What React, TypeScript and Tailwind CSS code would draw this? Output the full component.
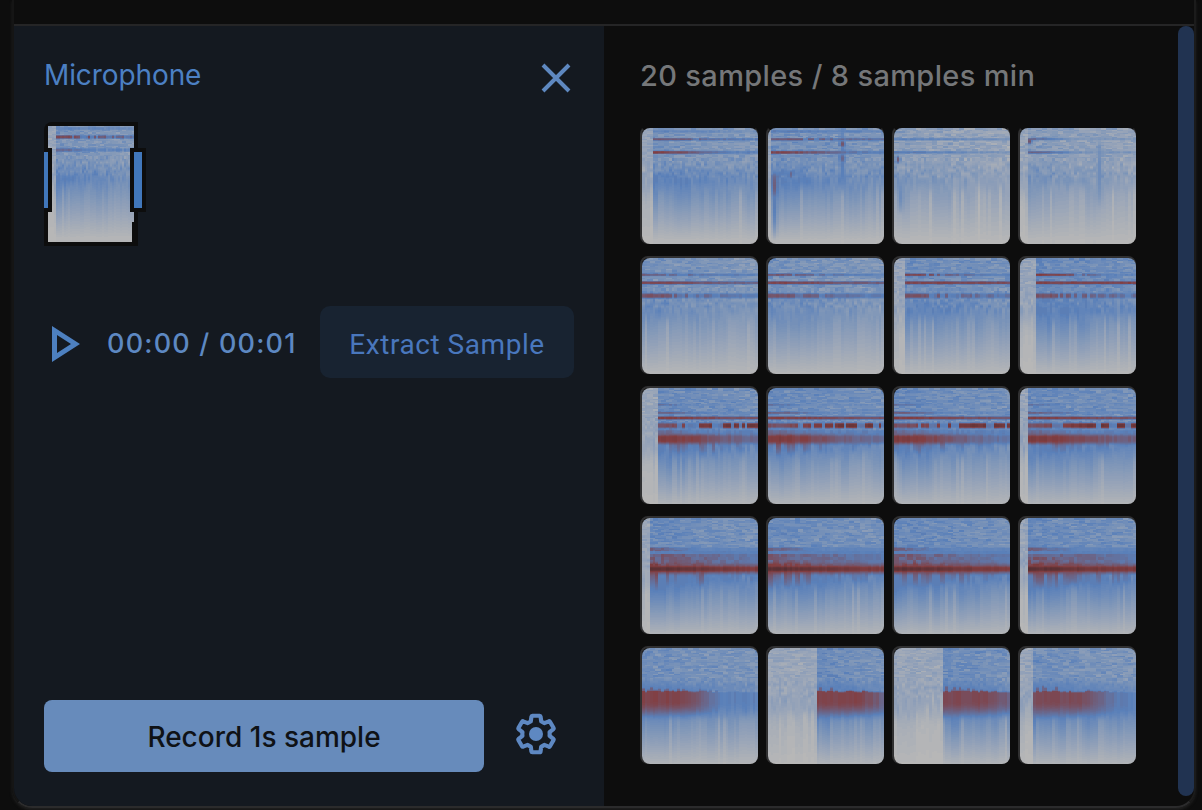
import React from "react";

type Band = { y: number; h: number; from: number; to: number; dash?: number; reach?: number };
type Spec = {
  seed: number;
  onset: number;
  top: number;
  low: number;
  peak: number;
  end: number;
  bands: Band[];
  fingers?: [number, number, number];
  haze?: [number, number, number];
  block?: [number, number];
  clicks?: [number, number, number, number][];
};

const COLS = 43;
const SIZE = 116;
const LEVELS = 84;

function hash(a: number, b: number, c: number) {
  let h = Math.imul(a + 11, 374761393) ^ Math.imul(b + 7, 668265263) ^ Math.imul(c + 3, 2147483647 - 1640531);
  h = Math.imul(h ^ (h >>> 13), 1274126177);
  h = Math.imul(h ^ (h >>> 15), 2246822519);
  return ((h ^ (h >>> 16)) >>> 0) / 4294967296;
}

const bell = (a: number, b: number, c: number) => (hash(a, b, c) + hash(a, b, c + 500)) / 2;
const clamp = (v: number, lo = 0, hi = 1) => Math.max(lo, Math.min(hi, v));
const smooth = (v: number) => {
  const t = clamp(v);
  return t * t * (3 - 2 * t);
};

const STOPS = [
  [183, 183, 183],
  [90, 128, 185],
  [130, 62, 65],
  [66, 40, 44],
];

function colour(v: number) {
  const t = clamp(v, 0, 2.999);
  const i = Math.floor(t);
  const f = t - i;
  const c = STOPS[i].map((s, k) => Math.round(s + (STOPS[i + 1][k] - s) * f));
  return `rgb(${c[0]},${c[1]},${c[2]})`;
}

function rowKey(y: number) {
  if (y < 30) return y / 1.5;
  if (y < 50) return 20 + (y - 30) / 3;
  return 26.67 + (y - 50) / 8;
}

function level(s: Spec, c: number, y: number) {
  const x = (c + 0.5) / COLS;
  const live = x >= s.onset;
  const age = live ? (x - s.onset) / (1 - s.onset) : 0;
  const k = rowKey(y);
  const r0 = Math.floor(k);
  const f = k - r0;
  const group = y < 30 ? Math.floor((c + hash(r0, 5, s.seed) * 3) / 2) : c;
  const a = bell(group, r0, s.seed);
  const b = bell(c, r0 + 1, s.seed);
  const n = (y < 34 ? a : a + (b - a) * f) - 0.5;
  const streak = hash(c, 991, s.seed);
  const drift = hash(Math.floor(c / 3), 417, s.seed) - 0.5;

  const upper = s.top - age * 0.14 + n * 0.55;
  const ramp = smooth((y - 30) / (s.peak - 30));
  const body = s.low - age * 0.28 + n * 0.5 * (1 - smooth((y - s.peak + 8) / 24));
  let v = upper + (body - upper) * ramp;
  const fall = clamp((y - s.peak) / (s.end - s.peak));
  const pale = (streak > 0.93 ? 0.3 : streak > 0.8 ? 0.12 : streak < 0.2 ? -0.06 : 0) + drift * 0.22;
  v -= pale * smooth((y - s.peak + 4) / 20);
  v *= 1 - Math.pow(fall, 0.95) * 0.97;
  if (!live) {
    v = (0.34 + n * 0.42) * (1 - smooth((y - 48) / 34) * 0.75) * (1 - fall);
    if (streak < 0.4) v += 0.14 * (1 - fall) * smooth((y - 45) / 20);
    return v;
  }
  v = Math.min(v, 1.04);

  if (s.haze) {
    const [y0, y1, amt] = s.haze;
    const inside = smooth((y - y0) / 2) * (1 - smooth((y - y1) / 3));
    const h = hash(Math.floor(c / 1.6), Math.floor(y / 3.5), s.seed + 9);
    const near = y < y0 + 5 ? 1 - smooth(age / 0.5) : y < y0 + 8 ? 0.15 : 1 - age * 0.75;
    v += (0.96 + amt * (0.4 + h * 0.6) * near - v) * inside * (y < y0 + 8 ? 0.85 : 1);
  }
  if (s.fingers) {
    const [y0, y1, amt] = s.fingers;
    const len = hash(Math.floor(c / 1.4), 77, s.seed);
    const reach = y0 + (y1 - y0) * (0.3 + len * 0.7) * (1 - age * 0.2);
    const t = (1 - smooth((y - y0) / Math.max(1, reach - y0))) * smooth((y - y0 + 9) / 6);
    if (y > y0 - 9 && y < reach) v += Math.max(0, len - 0.25) * amt * t * (1 - age * 0.75);
  }
  if (s.block) {
    const [hot, reach] = s.block;
    const jag = 43 - Math.pow(hash(c, 45, s.seed), 2) * 7 * (1 - age);
    if (y > 30) {
      const fade = 1 - smooth((age - reach * 0.45) / (reach * 0.65)) + (hash(c, 8, s.seed) - 0.5) * 0.18 * age;
      const inside = smooth((y - jag + 1) / 3) * (1 - smooth((y - 53) / 20));
      v += (1 + (hot - 0.12 * hash(c, 3, s.seed)) * fade * (y < 43 ? 0.5 : 1) - v) * inside;
      if (y < jag) v += (1 - v) * smooth((y - 28) / 13) * (1 - age * 0.75);
    }
  }
  for (const band of s.bands) {
    const d = Math.abs(y + 0.5 - band.y) / band.h;
    if (d > 2) continue;
    const t = smooth(age / (band.reach ?? 1));
    const jitter = hash(c, 31, s.seed + Math.round(band.y)) - 0.5;
    let peak = band.from + (band.to - band.from) * t + jitter * 0.2;
    if (band.dash && age > 0.2) {
      const h = hash(Math.floor(c / 1.3), 63, s.seed + Math.round(band.y));
      if (h < band.dash) peak = 0.95 + h * 0.6;
    }
    const w = d < 0.4 ? 1 : 1 - smooth((d - 0.4) / 1.6);
    v += (peak - v) * w;
  }
  for (const [cx, y0, y1, p] of s.clicks ?? []) {
    const dx = Math.abs(c - cx);
    if (dx <= 1 && y >= y0 && y <= y1) {
      const w = Math.sin(((y - y0) / (y1 - y0)) * Math.PI) * (dx ? 0.3 : 0.95);
      v += (Math.max(p, v) - v) * w;
    }
  }
  return v;
}

function Spectrogram({ spec, className }: { spec: Spec; className: string }) {
  const paths: string[] = Array(LEVELS + 1).fill("");
  for (let c = 0; c < COLS; c++) {
    let start = 0;
    let prev = -1;
    for (let y = 0; y <= SIZE; y++) {
      const q = y === SIZE ? -2 : Math.round((clamp(level(spec, c, y), 0, 2.95) / 3) * LEVELS);
      if (q !== prev) {
        if (prev >= 0) paths[prev] += `M${c} ${start}h1V${y}h-1z`;
        prev = q;
        start = y;
      }
    }
  }
  return (
    <svg viewBox={`0 0 ${COLS} ${SIZE}`} preserveAspectRatio="none" shapeRendering="crispEdges" className={className}>
      {paths.map((d, i) => (d ? <path key={i} d={d} fill={colour((i / LEVELS) * 3)} /> : null))}
    </svg>
  );
}

const quiet = { top: 0.6, low: 0.72, peak: 54, end: 112 };
const mid = { top: 0.72, low: 0.86, peak: 54, end: 115 };
const loud = { top: 0.84, low: 1.06, peak: 62, end: 118 };

const rowTwo = (hot: number): Band[] => [
  { y: 16.8, h: 1, from: 1.4 + hot, to: 0.95, dash: 0.3, reach: 0.9 },
  { y: 24.8, h: 1.2, from: 1.9, to: 1.3 + hot },
  { y: 37.8, h: 1.9, from: 1.7, to: 1.0 + hot * 0.5, dash: 0.6 - hot * 0.35 },
];
const rowThree = (hot: number): Band[] => [
  { y: 16.8, h: 0.8, from: 1.25, to: 0.8, reach: 0.4 },
  { y: 24.8, h: 0.9, from: 1.5, to: 0.85, reach: 0.6 },
  { y: 30, h: 1.2, from: 1.95, to: 1.65 },
  { y: 37.6, h: 2, from: 1.7, to: 2.35, dash: 0.42, reach: 0.7 },
  { y: 44, h: 1.8, from: 1.35, to: 1, reach: 0.5 },
  { y: 51, h: 3.6, from: 2.1, to: 1.2 + hot, reach: 1 },
];
const rowFour: Band[] = [
  { y: 51, h: 3.6, from: 1.95, to: 1.7 },
  { y: 51, h: 1.7, from: 2.6, to: 2.1 },
];

const SAMPLES: Spec[] = [
  {
    seed: 1, onset: 0.09, ...quiet, low: 1.02, top: 0.68,
    bands: [
      { y: 3.5, h: 1, from: 0.95, to: 0.7 },
      { y: 11.3, h: 1, from: 1.6, to: 1, dash: 0.4 },
      { y: 24.4, h: 1.2, from: 1.95, to: 1, reach: 0.85 },
    ],
  },
  {
    seed: 2, onset: 0.03, ...quiet, top: 0.74, low: 1,
    bands: [
      { y: 3.5, h: 1, from: 1.05, to: 0.9 },
      { y: 11.3, h: 1, from: 1.6, to: 1.2, dash: 0.35 },
      { y: 24.4, h: 1.2, from: 1.9, to: 1.05, reach: 0.9 },
    ],
    clicks: [[2, 42, 72, 1.55], [2, 40, 112, 1.05], [27, -10, 68, 1.05], [27, 12, 19, 1.7], [27, 26, 34, 1.4], [8, 41, 50, 1.4]],
  },
  {
    seed: 3, onset: 0, ...quiet, top: 0.48, low: 0.68,
    bands: [{ y: 11.3, h: 1, from: 0.95, to: 0.72 }, { y: 24.4, h: 1, from: 1.1, to: 0.65 }],
    clicks: [[1, 26, 36, 1.6], [2, 48, 86, 0.8]],
  },
  {
    seed: 4, onset: 0.07, ...quiet, top: 0.52, low: 0.72,
    bands: [
      { y: 11, h: 1, from: 1.3, to: 0.6, reach: 0.5 },
      { y: 24.4, h: 1, from: 1.45, to: 0.65, reach: 0.6 },
    ],
    clicks: [[3, 10, 16, 1.7], [29, 2, 80, 0.8]],
  },
  { seed: 5, onset: 0, ...mid, bands: rowTwo(0.1) },
  { seed: 6, onset: 0, ...mid, bands: rowTwo(0.2) },
  { seed: 7, onset: 0.09, ...mid, top: 0.8, low: 0.98, bands: rowTwo(0.5) },
  { seed: 8, onset: 0.15, ...mid, top: 0.86, low: 1.06, bands: rowTwo(0.6) },
  { seed: 9, onset: 0.13, ...loud, bands: rowThree(0.15), fingers: [52, 76, 1.2] },
  { seed: 10, onset: 0, ...loud, low: 1, bands: rowThree(0.12), fingers: [52, 72, 1.1] },
  { seed: 11, onset: 0, ...loud, low: 1, bands: rowThree(0), fingers: [52, 72, 1] },
  { seed: 12, onset: 0.07, ...loud, bands: rowThree(0.3), fingers: [52, 72, 1.1] },
  { seed: 13, onset: 0.075, ...loud, low: 1.18, bands: rowFour, haze: [28, 49, 0.85], fingers: [51, 76, 1.2] },
  { seed: 14, onset: 0, ...loud, low: 1.16, bands: rowFour, haze: [28, 49, 0.8], fingers: [51, 75, 1.1] },
  { seed: 15, onset: 0, ...loud, low: 1.16, bands: rowFour, haze: [28, 49, 0.8], fingers: [51, 75, 1.1] },
  { seed: 16, onset: 0.075, ...loud, low: 1.18, bands: rowFour, haze: [28, 49, 0.85], fingers: [51, 76, 1.1] },
  { seed: 17, onset: 0, ...loud, top: 0.76, low: 1.0, bands: [], block: [0.97, 0.68] },
  { seed: 18, onset: 0.42, ...loud, top: 0.82, low: 1.1, bands: [], block: [0.97, 1.25] },
  { seed: 19, onset: 0.42, ...loud, top: 0.82, low: 1.1, bands: [], block: [0.9, 1.3] },
  { seed: 20, onset: 0.12, ...loud, top: 0.76, low: 1.14, bands: [], block: [0.87, 0.86] },
];

const RECORDING: Spec = {
  seed: 31, onset: 0.09, ...quiet, top: 0.68, low: 0.98,
  bands: [
    { y: 2.5, h: 1.2, from: 0.95, to: 0.8 },
    { y: 11, h: 1.4, from: 1.8, to: 1.4, dash: 0.4 },
    { y: 24, h: 1.4, from: 1.4, to: 0.85, dash: 0.15, reach: 0.6 },
  ],
};

function Recording() {
  return (
    <div className="relative mt-[28px] h-[124px] w-[94px] rounded-tl-lg bg-[#0d0d0d] p-1">
      <Spectrogram spec={RECORDING} className="block h-[116px] w-[86px]" />
      <div className="absolute bottom-1 right-1 h-5 w-[2px] bg-[#0d0d0d]" />
      <div className="absolute left-0 top-[26px] h-16 w-2 border-y-4 border-r-4 border-[#0d0d0d] bg-[#4177bb]" />
      <div className="absolute left-[86px] top-[26px] h-16 w-4 border-4 border-[#0d0d0d] bg-[#4177bb]" />
    </div>
  );
}

export default function App() {
  return (
    <div className="flex h-[810px] w-[1202px] flex-col overflow-hidden bg-[#0d0d0d] px-3 font-['Inter',sans-serif]">
      <div className="flex h-[808px] w-[1184px] flex-col rounded-b-[20px] border-b-2 border-l-2 border-r-2 border-b-[#2b2b2c] border-l-[#151515] border-r-[#1b1b1b] shadow-[0_2px_3px_#202020]">
        <div className="h-[26px] shrink-0 border-b-2 border-[#252526]" />
        <div className="flex min-h-0 grow">
          <section className="flex w-[590px] shrink-0 flex-col rounded-bl-[18px] bg-[#141920] pl-[30px]">
            <header className="flex h-[68px] items-start justify-between pr-[32px]">
              <h2 className="mt-[32px] text-[28px] leading-[34px] tracking-[-0.1px] text-[#4c80c3]">Microphone</h2>
              <button aria-label="Close" className="mt-[36px]">
                <svg viewBox="0 0 32 32" className="block h-8 w-8" stroke="#5e88c0" strokeWidth="4" fill="none">
                  <path d="M3 3 29 29M29 3 3 29" />
                </svg>
              </button>
            </header>
            <Recording />
            <div className="mt-[60px] flex h-[72px] items-center">
              <svg viewBox="0 0 28 36" className="ml-2 mt-[4px] h-9 w-7" fill="#4d80c0" fillRule="evenodd">
                <path d="M0 0 28 18 0 36ZM5 9v18l14-9Z" />
              </svg>
              <div className="ml-[27px] mt-[4px] w-[213px] whitespace-nowrap text-[27px] font-medium tracking-[1.2px] text-[#5d88c2]">
                00:00 / 00:01
              </div>
              <button className="h-[72px] w-[254px] shrink-0 rounded-[10px] bg-[#182331] pt-[6px] font-['Roboto'] text-[28px] tracking-[0.55px] text-[#4977bd]">
                Extract Sample
              </button>
            </div>
            <div className="mb-[34px] mt-auto flex h-[72px] items-center">
              <button className="h-[72px] w-[440px] rounded-lg bg-[#678bbb] pt-[2px] text-[28px] font-medium text-[#0f1216]">
                Record 1s sample
              </button>
              <button aria-label="Settings" className="ml-[28px] -mt-1">
                <svg viewBox="0 0 48 48" className="block h-12 w-12" fill="none" stroke="#5e88c2">
                  <path
                    transform="translate(24 24) scale(1.9) translate(-12 -12)"
                    strokeWidth="2.2"
                    strokeLinejoin="round"
                    d="M19.14 12.94c.04-.3.06-.61.06-.94s-.02-.64-.07-.94l2.03-1.58a.49.49 0 0 0 .12-.61l-1.92-3.32a.49.49 0 0 0-.59-.22l-2.39.96c-.5-.38-1.03-.7-1.62-.94l-.36-2.54a.48.48 0 0 0-.48-.41h-3.84a.48.48 0 0 0-.47.41l-.36 2.54c-.59.24-1.13.57-1.62.94l-2.39-.96a.48.48 0 0 0-.59.22L2.74 8.87a.48.48 0 0 0 .12.61l2.03 1.58c-.05.3-.09.63-.09.94s.02.64.07.94l-2.03 1.58a.49.49 0 0 0-.12.61l1.92 3.32c.12.22.37.29.59.22l2.39-.96c.5.38 1.03.7 1.62.94l.36 2.54c.05.24.24.41.48.41h3.84c.24 0 .44-.17.47-.41l.36-2.54c.59-.24 1.13-.56 1.62-.94l2.39.96c.22.08.47 0 .59-.22l1.92-3.32a.48.48 0 0 0-.12-.61z"
                  />
                  <circle cx="24" cy="24" r="7" fill="#5e88c2" stroke="none" />
                </svg>
              </button>
            </div>
          </section>
          <section className="flex grow flex-col pl-9">
            <p className="mt-[33px] text-[29px] font-medium leading-[34px] tracking-[0.35px] text-[#757779]">
              20 samples / 8 samples min
            </p>
            <div className="mt-[31px] h-[642px] overflow-hidden">
              <div className="mt-[2px] grid w-[504px] grid-cols-4 gap-y-3">
                {SAMPLES.map((s, i) => (
                  <div
                    key={i}
                    className={
                      "h-[118px] w-[118px] rounded-lg border-2 border-[#303031] " +
                      (i < 4 ? "border-t-transparent" : "")
                    }
                  >
                    <Spectrogram spec={s} className="block h-[116px] w-[116px] max-w-none rounded-lg" />
                  </div>
                ))}
              </div>
            </div>
          </section>
          <div className="h-[770px] w-4 shrink-0 rounded-lg bg-[#213351]" />
        </div>
      </div>
    </div>
  );
}
